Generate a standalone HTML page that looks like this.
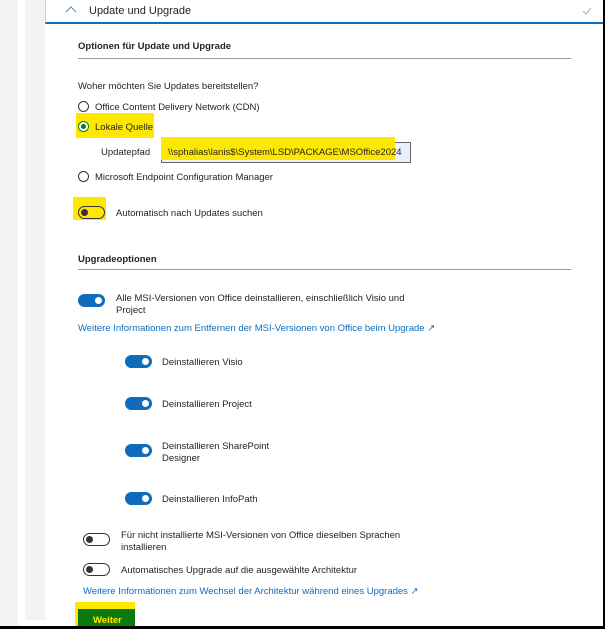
<!DOCTYPE html>
<html><head><meta charset="utf-8"><style>
*{margin:0;padding:0;box-sizing:border-box}
body{width:605px;height:629px;position:relative;overflow:hidden;background:#000;font-family:"Liberation Sans",sans-serif;color:#252423;font-size:9.5px}
.a{position:absolute;white-space:nowrap}
.b{font-weight:bold;font-size:9.5px}
.lnk{color:#0f6cbd}
.radio{position:absolute;width:11px;height:11px;border:1px solid #333;border-radius:50%;background:#fff}
.tg{position:absolute;width:27px;height:13px;border-radius:7px}
.on{background:#0f6cbd}
.on:after{content:"";position:absolute;right:3px;top:3px;width:7px;height:7px;border-radius:50%;background:#fff}
.off{border:1px solid #333;background:#fff}
.off:after{content:"";position:absolute;left:2px;top:2px;width:7px;height:7px;border-radius:50%;background:#333}
.hl{position:absolute;background:#ffe800}
</style></head><body>
<div class="a" style="left:0;top:0;width:603px;height:626px;background:#fff"></div>
<div class="a" style="left:0;top:0;width:18px;height:626px;background:#f3f3f3"></div>
<div class="a" style="left:25px;top:0;width:20px;height:620px;background:#f3f3f3"></div>
<div class="a" style="left:45px;top:0;width:558px;height:24px;border-left:1px solid #ccc;border-bottom:2px solid #0f6cbd"></div>
<svg class="a" style="left:65px;top:6px" width="12" height="8"><path d="M1 6 L6 1 L11 6" fill="none" stroke="#5a8ac6" stroke-width="1"/></svg>
<div class="a" style="left:89px;top:5px;font-size:11px">Update und Upgrade</div>
<svg class="a" style="left:582px;top:7px" width="10" height="8"><path d="M1 4 L4 7 L9 1" fill="none" stroke="#9bb" stroke-width="1"/></svg>

<div class="a b" style="left:78px;top:41px">Optionen für Update und Upgrade</div>
<div class="a" style="left:78px;top:58px;width:493px;height:1px;background:#999"></div>
<div class="a" style="left:78px;top:81px">Woher möchten Sie Updates bereitstellen?</div>
<div class="radio" style="left:78px;top:101px"></div>
<div class="a" style="left:95px;top:102px">Office Content Delivery Network (CDN)</div>
<div class="hl" style="left:76px;top:113px;width:78px;height:25px"></div>
<div class="radio" style="left:78px;top:121px;border-color:#107c10"><div style="position:absolute;left:2px;top:2px;width:5px;height:5px;border-radius:50%;background:#107c10"></div></div>
<div class="a" style="left:95px;top:122px">Lokale Quelle</div>
<div class="a" style="left:101px;top:147px">Updatepfad</div>
<div class="a" style="left:161px;top:142px;width:250px;height:21px;border:1px solid #666;background:#e8f0fe"></div>
<div class="hl" style="left:161px;top:137px;width:234px;height:23px"></div>
<div class="a" style="left:168px;top:147px">\\sphalias\lanis$\System\LSD\PACKAGE\MSOffice2024</div>
<div class="radio" style="left:78px;top:171px"></div>
<div class="a" style="left:95px;top:172px">Microsoft Endpoint Configuration Manager</div>
<div class="hl" style="left:73px;top:197px;width:33px;height:23px"></div>
<div class="tg off" style="left:78px;top:206px;background:transparent"></div>
<div class="a" style="left:116px;top:208px">Automatisch nach Updates suchen</div>

<div class="a b" style="left:78px;top:254px">Upgradeoptionen</div>
<div class="a" style="left:78px;top:269px;width:493px;height:1px;background:#999"></div>
<div class="tg on" style="left:78px;top:294px"></div>
<div class="a" style="left:116px;top:293px">Alle MSI-Versionen von Office deinstallieren, einschließlich Visio und</div>
<div class="a" style="left:116px;top:305px">Project</div>
<div class="a lnk" style="left:78px;top:323px">Weitere Informationen zum Entfernen der MSI-Versionen von Office beim Upgrade ↗</div>
<div class="tg on" style="left:125px;top:355px"></div>
<div class="a" style="left:162px;top:357px">Deinstallieren Visio</div>
<div class="tg on" style="left:125px;top:397px"></div>
<div class="a" style="left:162px;top:399px">Deinstallieren Project</div>
<div class="tg on" style="left:125px;top:444px"></div>
<div class="a" style="left:162px;top:441px">Deinstallieren SharePoint</div>
<div class="a" style="left:162px;top:453px">Designer</div>
<div class="tg on" style="left:125px;top:492px"></div>
<div class="a" style="left:162px;top:494px">Deinstallieren InfoPath</div>
<div class="tg off" style="left:83px;top:533px"></div>
<div class="a" style="left:121px;top:530px">Für nicht installierte MSI-Versionen von Office dieselben Sprachen</div>
<div class="a" style="left:121px;top:542px">installieren</div>
<div class="tg off" style="left:83px;top:563px"></div>
<div class="a" style="left:121px;top:565px">Automatisches Upgrade auf die ausgewählte Architektur</div>
<div class="a lnk" style="left:83px;top:586px">Weitere Informationen zum Wechsel der Architektur während eines Upgrades ↗</div>
<div class="hl" style="left:75px;top:602px;width:60px;height:24px"></div>
<div class="a" style="left:78px;top:609px;width:57px;height:17px;background:#0a7a0a"></div>
<div class="a" style="left:93px;top:615px;color:#ffe800;font-weight:bold">Weiter</div>
</body></html>
